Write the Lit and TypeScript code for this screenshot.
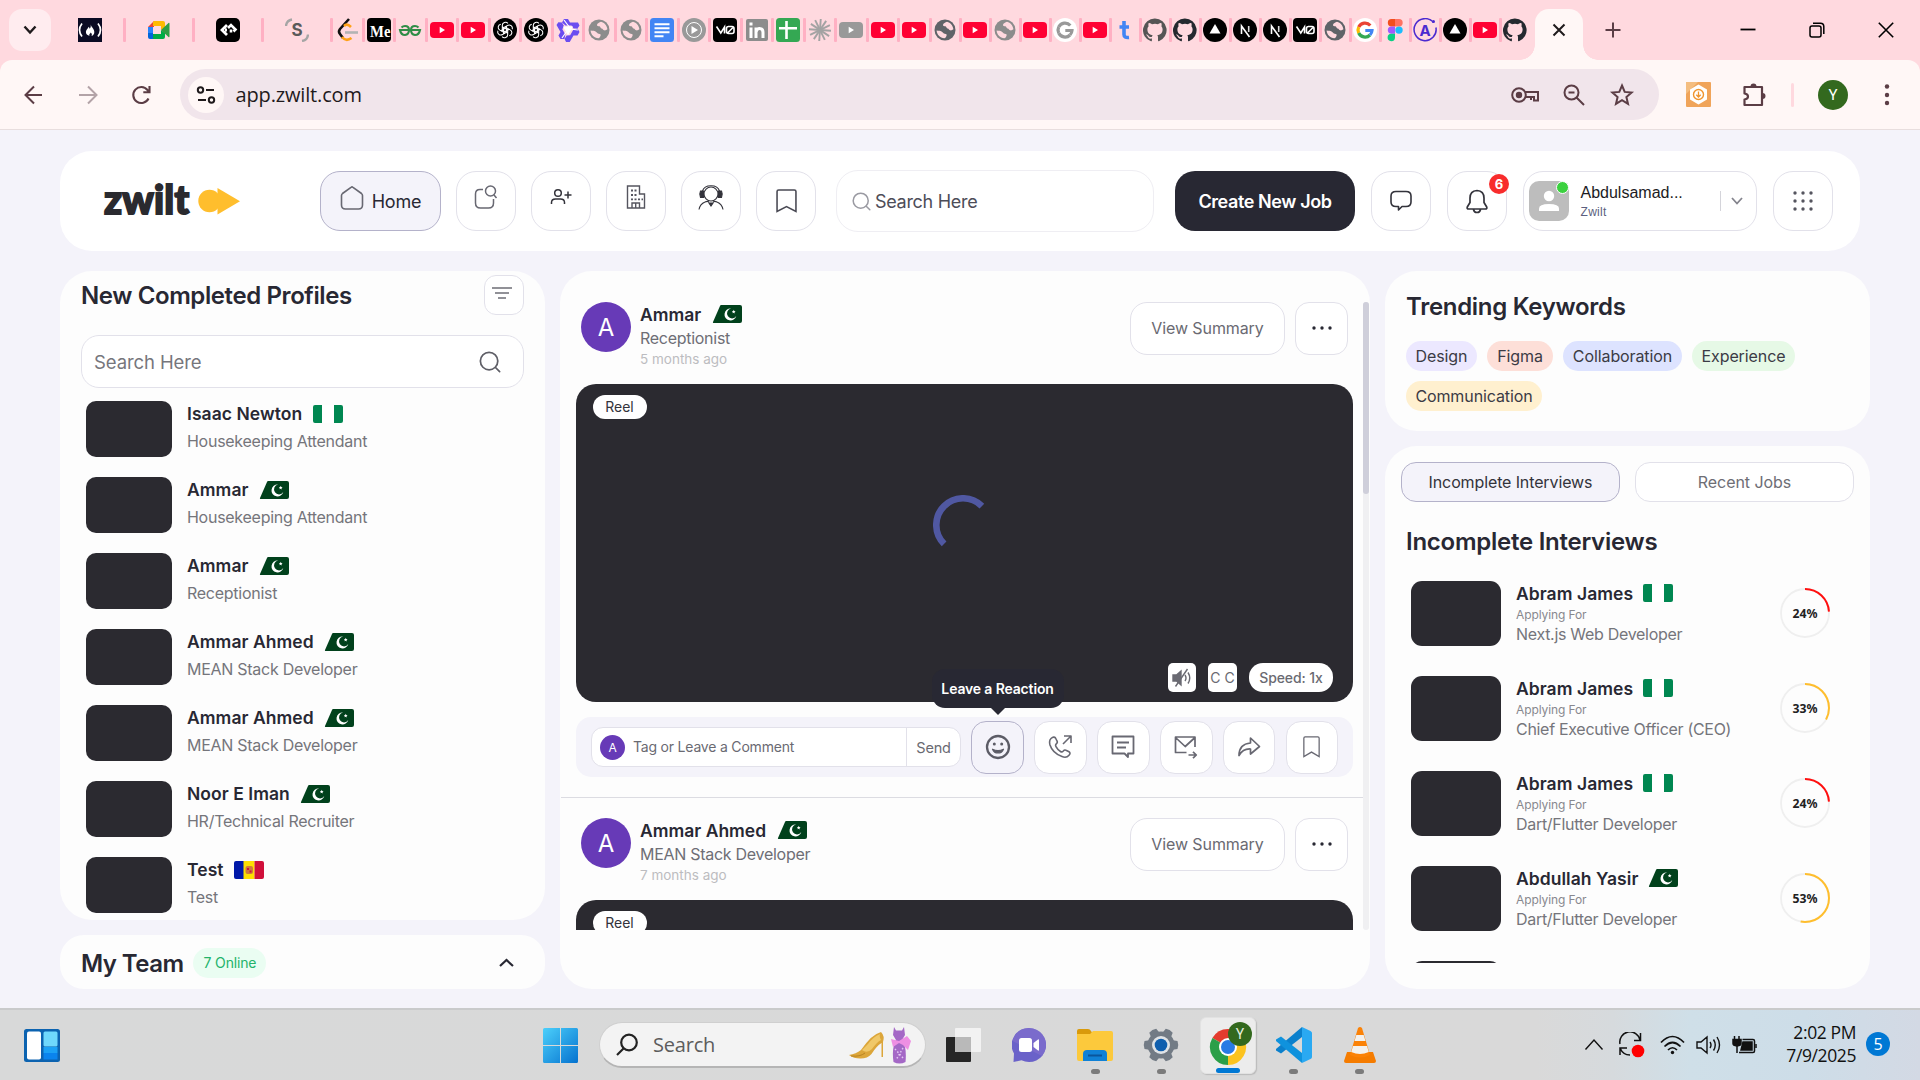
import { LitElement, html, svg, css } from "lit";
import { customElement, property } from "lit/decorators.js";

const base = css`
  *, *::before, *::after { box-sizing: border-box; }
  svg { display: block; flex: none; }
`;

const youtube = (bg: string) => svg`<rect x="0" y="4" width="24" height="16" rx="4" fill="${bg}"/><path d="M9.700 8.800v6.400l5.300-3.200z" fill="#fff"/>`;
const globe = (c: string) => svg`<circle cx="12" cy="12" r="10.500" fill="${c}"/><path d="M3.600 12.500c2 .2 4.500.3 5.600 1.500 1.200 1.300 2.200 1.800 3.500 2 1.400.2 1 1.600.5 2.500-.4.8-.6 1.600-1.800 1.800C7 20 3.800 16.500 3.600 12.500zM14 3.700c-1.500.8-3.800 1.200-4 3-.1 1.600 1.300 1.300 2.500 1.600 1 .3.700 1.900 2 2.200 1.500.3 1.600 1.500 2.600 1.800 1.300.3 2.300-.3 3.300-1C20 7.500 17.500 4.500 14 3.700z" fill="#ffd9df"/>`;
const github = (c: string) => svg`<path fill="${c}" d="M12 .5a11.700 11.700 0 0 0-4 22.800c.6.1.9-.3.9-.6v-2.200c-3.300.7-4-1.500-4-1.500-.5-1.400-1.300-1.800-1.300-1.800-1.100-.7.1-.7.1-.7 1.200.1 1.800 1.200 1.800 1.200 1.100 1.800 2.800 1.300 3.500 1 .1-.8.400-1.300.8-1.600-2.700-.3-5.400-1.300-5.400-5.800 0-1.300.5-2.300 1.200-3.100-.1-.3-.5-1.500.1-3.200 0 0 1-.3 3.300 1.200a11.500 11.500 0 0 1 6 0c2.300-1.500 3.300-1.200 3.300-1.200.6 1.700.2 2.900.1 3.200.8.8 1.200 1.900 1.200 3.100 0 4.500-2.700 5.500-5.400 5.800.4.400.8 1.100.8 2.200v3.300c0 .3.200.7.900.6A11.700 11.700 0 0 0 12 .5z"/>`;
const letter = (t: string, fill: string, size: number, y = 17, family = "Inter, sans-serif", weight = 700) =>
  svg`<text x="12" y="${y}" text-anchor="middle" font-size="${size}" font-weight="${weight}" font-family="${family}" fill="${fill}">${t}</text>`;
const chatgpt = svg`<circle cx="12" cy="12" r="12" fill="#000"/><g fill="none" stroke="#fff" stroke-width="1.050">${[0, 60, 120, 180, 240, 300].map(a => svg`<path transform="rotate(${a} 12 12)" d="M9.300 13.500V7.600a3.200 3.200 0 0 1 5.600-2.200M9.300 8.800l5.400 3.100"/>`)}</g>`;
const vercel = svg`<circle cx="12" cy="12" r="12" fill="#000"/><path d="M12 6l5.500 9.500h-11z" fill="#fff"/>`;
const next = svg`<circle cx="12" cy="12" r="12" fill="#000"/><path d="M8.500 16V8l8 11" fill="none" stroke="#fff" stroke-width="1.600"/><path d="M15.700 8v6" stroke="#ddd" stroke-width="1.600"/>`;
const v0 = svg`<rect width="24" height="24" rx="4" fill="#000"/><path d="M3.500 8.500l4.300 6.500L11.500 9v6.500M15 8.500h4q2 0 2 2v3q0 2-2 2h-3.500q-2 0-2-2v-3q0-2 2-2zM14.500 15L20.500 9" fill="none" stroke="#fff" stroke-width="1.600"/>`;
const google = (grey: boolean) => svg`<circle cx="12" cy="12" r="12" fill="#fff"/><g fill="none" stroke-width="3.200">
  <path d="M17.300 7.500A7 7 0 0 0 5.700 9" stroke="${grey ? "#999" : "#ea4335"}"/><path d="M5.700 9a7 7 0 0 0 0 6" stroke="${grey ? "#999" : "#fbbc05"}"/>
  <path d="M5.700 15a7 7 0 0 0 11.300 2" stroke="${grey ? "#999" : "#34a853"}"/><path d="M17 17a7 7 0 0 0 2-4.500H12.300" stroke="${grey ? "#999" : "#4285f4"}"/></g>`;

const favicons: Record<string, unknown> = {
  fcc: svg`<rect width="24" height="24" fill="#0a0a23"/><path d="M4 5.500q-5 6.500 0 13M20 5.500q5 6.500 0 13" fill="none" stroke="#fff" stroke-width="1.700"/><path d="M12.500 6c.5 3 3.800 4.500 3.800 8 0 2-1 3.500-2.800 4 .8-1.500.2-2.500-.8-3.500-.6 1.500-2.200 1.800-1 3.500-2.400-.6-4-2-3.800-4.200.2-2.400 2.400-3 2.600-5 .8.600 1 1.300 1 2 1.300-1 1.600-3 1-4.800z" fill="#fff"/>`,
  meet: svg`<path d="M1 9l6-6v6z" fill="#ea4335"/><path d="M1 9h5v6H1z" fill="#2684fc"/><path d="M1 15h5v6H3q-2 0-2-2z" fill="#0066da"/><path d="M7 3h9q2 0 2 2v4l-4 3V8H6V4z" fill="#ffba00"/><path d="M6 16h8v-4l4 3v4q0 2-2 2H6z" fill="#00ac47"/><path d="M14 12l7.500-7q1-.6 1 .8v12.400q0 1.400-1 .8z" fill="#2f9e44"/>`,
  cr: svg`<rect width="24" height="24" rx="5" fill="#000"/><path d="M11 7L6 12l5 5M9 12h2" fill="none" stroke="#fff" stroke-width="2.800"/><path d="M12 10l3-3 4.500 4.500-2 2M15 11.500v3" fill="none" stroke="#fff" stroke-width="2.600"/>`,
  s: svg`${letter("S", "#5a5a5a", 17, 18)}<path d="M1 8q.5-5.500 6-6.500M17 23q5.500-1 6-6.500" fill="none" stroke="#a5a5a5" stroke-width="2.400"/>`,
  leet: svg`<path d="M14 1L5 11q-2 2.500 0 5l3 4" fill="none" stroke="#111" stroke-width="2.600"/><path d="M9 8q3-3 7 1M7 19q4 5 9.500 1" fill="none" stroke="#ffa116" stroke-width="2.600"/><path d="M10 14.500h13" stroke="#b3b3b3" stroke-width="2.600"/>`,
  medium: svg`<rect width="24" height="24" rx="4" fill="#000"/><text x="3" y="18.500" font-size="17.500" font-weight="700" font-family="Liberation Serif, serif" fill="#fff" textLength="20.500" lengthAdjust="spacingAndGlyphs">Me</text>`,
  gfg: svg`<path d="M11 12H2q1 5 5 5 4-.5 4-5 0-4-4-4-2 0-3.500 1.500M13 12h9q-1 5-5 5-4-.5-4-5 0-4 4-4 2 0 3.500 1.500" fill="none" stroke="#2f8d46" stroke-width="2.100"/>`,
  yt: youtube("#ff0033"),
  ytg: youtube("#999"),
  gpt: chatgpt,
  qwen: svg`<g fill="#6b4df0">${[0, 120, 240].map(a => svg`<path transform="rotate(${a} 12 12)" d="M8 1h4l2 3.500h8l1.500 3-2 3h-4l-2-3H9.500L6 4.500z"/>`)}</g><g stroke="#fff" stroke-width="1.200" fill="none"><path d="M8 9h8l-4 7z" fill="#fff"/><path d="M8 2l6 8M22 12l-8-1M6 20l5-7"/></g>`,
  globe: globe("#8c8c8c"),
  globed: globe("#5f6368"),
  docs: svg`<rect width="24" height="24" rx="3.500" fill="#4285f4"/><path d="M4.500 6.200h15M4.500 10.200h15M4.500 14.200h15M4.500 18.200h9" stroke="#fff" stroke-width="2"/>`,
  ytm: svg`<circle cx="12" cy="12" r="12" fill="#999"/><circle cx="12" cy="12" r="7.500" fill="none" stroke="#fff"/><path d="M9.500 8v8l6.500-4z" fill="#fff"/>`,
  v0,
  li: svg`<rect x="1" y="1" width="22" height="22" rx="2" fill="#8c8c8c"/><path d="M6 9.500V20M6 4.500v3M11 9.500V20M11 14q1-3.800 4-3.500 3 .2 3 4V20" fill="none" stroke="#fff" stroke-width="3"/>`,
  sheet: svg`<rect width="24" height="24" rx="3.500" fill="#34a853"/><path d="M3 10.200h18M10.500 3v18" stroke="#fff" stroke-width="2.600"/>`,
  claude: svg`<g stroke="#a3a3a3" stroke-width="1.900">${[0, 30, 60, 90, 120, 150].map(a => svg`<path transform="rotate(${a + 4} 12 12)" d="M12 1v22"/>`)}</g>`,
  gg: google(true),
  g: google(false),
  t: svg`<path d="M11 3v13.500q0 3.500 5 3M6.500 9h9.500" fill="none" stroke="#4285f4" stroke-width="3.600"/>`,
  gh: github("#24292f"),
  ghg: github("#555"),
  vercel,
  next,
  figma: svg`<path d="M12 1H8.500a3.700 3.700 0 0 0 0 7.400H12z" fill="#f24e1e"/><path d="M12 1h4a3.700 3.700 0 0 1 0 7.400h-4z" fill="#ff7262"/><path d="M12 8.400H8.500a3.700 3.700 0 0 0 0 7.400H12z" fill="#a259ff"/><circle cx="16" cy="12.100" r="3.700" fill="#1abcfe"/><path d="M12 15.800H8.500A3.700 3.700 0 1 0 12 19.500z" fill="#0acf83"/>`,
  apollo: svg`<path d="M20.500 4.500a11 11 0 1 0 2.400 5" fill="none" stroke="#4b2ad0" stroke-width="1.500"/>${letter("A", "#4b2ad0", 15, 17.500)}<circle cx="20.500" cy="3.600" r="1.500" fill="#4b2ad0"/>`,
};

const wideTabs = ["fcc", "meet", "cr", "s"];
const midTabs = ["leet", "medium", "gfg", "yt", "yt", "gpt", "gpt", "qwen", "globe", "globe", "docs", "ytm", "v0", "li", "sheet", "claude", "ytg", "yt", "yt"];
const slimTabs = ["globed", "yt", "globe", "yt", "gg", "yt", "t", "ghg", "gh", "vercel", "next", "next", "v0", "globed", "g", "figma", "apollo", "vercel", "yt", "gh"];

@customElement("browser-chrome")
export class BrowserChrome extends LitElement {
  static styles = [base, css`
    :host { display: block; background: #ffd9df; height: 130px; }
    .strip { height: 60px; display: flex; align-items: center; }
    .menu { width: 42px; height: 42px; border-radius: 13px; background: #ffecef; margin-left: 9px; margin-right: 4.500px; display: grid; place-items: center; }
    .tab { height: 24px; display: flex; align-items: center; justify-content: center; position: relative; flex: none; }
    .tab::after { content: ""; position: absolute; right: -1.500px; top: 0; width: 3px; height: 24px; border-radius: 1px; background: #ffb0c3; }
    .tab.last::after { display: none; }
    .wide { width: 69px; } .mid { width: 31.500px; } .slim { width: 30px; }
    .active { align-self: flex-end; width: 48px; height: 51px; margin-left: 5px; background: #fff7f6; border-radius: 14px 14px 0 0; display: grid; place-items: center; padding-bottom: 9px; position: relative; }
    .active::before, .active::after { content: ""; position: absolute; bottom: 0; width: 15px; height: 15px; }
    .active::before { left: -15px; background: radial-gradient(circle at 0 0, transparent 14.500px, #fff7f6 15px); }
    .active::after { right: -15px; background: radial-gradient(circle at 100% 0, transparent 14.500px, #fff7f6 15px); }
    .plus { margin-left: 22px; }
    .win { margin-left: auto; display: flex; gap: 53px; margin-right: 26px; align-items: center; }
    .bar { height: 70px; background: #fff7f6; border-radius: 12px 12px 0 0; border-bottom: 1px solid #e8dede; display: flex; align-items: center; padding-left: 22px; }
    .nav { display: flex; gap: 29.500px; }
    .omni { margin-left: 27px; width: 1479px; height: 51px; border-radius: 26px; background: #f1e5eb; display: flex; align-items: center; padding: 0 24px 0 8px; }
    .site { width: 36px; height: 36px; border-radius: 50%; background: #fff7f6; display: grid; place-items: center; }
    .url { font: 20px "Open Sans", "Noto Sans", sans-serif; color: #1f1a1c; margin-left: 11.500px; letter-spacing: -0.150px; }
    .acts { margin-left: auto; display: flex; gap: 22px; align-items: center; }
    .ext { display: flex; align-items: center; margin-left: 27px; }
    .ext .p { margin-left: 30px; }
    .sep { width: 3px; height: 24px; background: #ffd9df; border-radius: 2px; margin: 0 24px 0 24px; }
    .me { width: 30px; height: 30px; border-radius: 50%; background: #33691e; color: #fff; font: 15px Roboto, sans-serif; display: grid; place-items: center; }
    .dots { margin-left: 27px; }
  `];
  private tab(n: string, cls: string, last = false) {
    return html`<div class="tab ${cls} ${last ? "last" : ""}"><svg width="24" height="24" viewBox="0 0 24 24">${favicons[n]}</svg></div>`;
  }
  render() {
    const ink = "#5b3d45";
    return html`
      <div class="strip">
        <div class="menu"><svg width="14" height="10" viewBox="0 0 14 10"><path d="M1.500 1.500L7 7.500l5.500-6" fill="none" stroke="#1f1a1c" stroke-width="2.400"/></svg></div>
        ${wideTabs.map(n => this.tab(n, "wide"))}
        ${midTabs.map(n => this.tab(n, "mid"))}
        ${slimTabs.map((n, i) => this.tab(n, "slim", i === slimTabs.length - 1))}
        <div class="active"><svg width="14" height="14" viewBox="0 0 14 14"><path d="M1.500 1.500l11 11M12.500 1.500l-11 11" stroke="#1f1a1c" stroke-width="2"/></svg></div>
        <div class="plus"><svg width="16" height="16" viewBox="0 0 16 16"><path d="M8 .5v15M.5 8h15" stroke="${ink}" stroke-width="2"/></svg></div>
        <div class="win">
          <svg width="16" height="16" viewBox="0 0 16 16"><path d="M.5 7.500h15" stroke="#000" stroke-width="1.800"/></svg>
          <svg width="16" height="16" viewBox="0 0 16 16" fill="none" stroke="#000" stroke-width="1.500"><rect x="1" y="4" width="11" height="11" rx="2"/><path d="M4 1.200h7.500q3.300 0 3.300 3.300V12"/></svg>
          <svg width="16" height="16" viewBox="0 0 16 16"><path d="M.8.8l14.400 14.400M15.200.8L.8 15.200" stroke="#000" stroke-width="1.600"/></svg>
        </div>
      </div>
      <div class="bar">
        <div class="nav">
          <svg width="24" height="24" viewBox="0 0 24 24" fill="none" stroke="${ink}" stroke-width="2"><path d="M20 12H4M12 3.500L3.500 12l8.500 8.500"/></svg>
          <svg width="24" height="24" viewBox="0 0 24 24" fill="none" stroke="#b3a3a7" stroke-width="2"><path d="M3 12h17M12 3.500l8.500 8.500-8.500 8.500"/></svg>
          <svg width="24" height="24" viewBox="0 0 24 24" fill="none" stroke="${ink}" stroke-width="2.100"><path d="M19.500 15.500A8 8 0 1 1 18.500 7L20.500 9M20.500 3v6.200h-6.200"/></svg>
        </div>
        <div class="omni">
          <div class="site"><svg width="20" height="18" viewBox="0 0 20 18" fill="none" stroke="#1f1a1c" stroke-width="2"><circle cx="4.500" cy="4" r="2.700"/><path d="M10 4h8M2 14h8"/><circle cx="15.500" cy="14" r="2.700"/></svg></div>
          <span class="url">app.zwilt.com</span>
          <div class="acts">
            <svg width="28" height="26" viewBox="0 0 28 26" fill="none" stroke="${ink}" stroke-width="2"><circle cx="8" cy="13" r="6.800"/><circle cx="8" cy="13" r="2.200" fill="${ink}"/><path d="M14 10h13v8.500h-4V15h-3v3"/><path d="M14 15h6"/></svg>
            <svg width="26" height="26" viewBox="0 0 26 26" fill="none" stroke="${ink}" stroke-width="2"><circle cx="10.500" cy="10.500" r="7"/><path d="M7.500 10.500h6M15.500 15.500l7.500 7.500"/></svg>
            <svg width="26" height="26" viewBox="0 0 26 26" fill="none" stroke="${ink}" stroke-width="2"><path d="M13 3.500l2.700 6.400 6.900.6-5.200 4.500 1.600 6.800L13 18.200l-6 3.600L8.600 15 3.400 10.500l6.900-.6z"/></svg>
          </div>
        </div>
        <div class="ext">
          <svg width="25" height="25" viewBox="0 0 25 25"><rect width="25" height="25" rx="1" fill="#f0a45a"/><path d="M0 0h12L0 12z" fill="#f4bd80"/><path d="M12.500 2.500l8.500 5v10l-8.500 5-8.500-5v-10z" fill="#fff"/><circle cx="12.500" cy="12.500" r="5" fill="none" stroke="#f0952f" stroke-width="1.400"/><path d="M12.500 9.500v5M10.300 12.800l2.200 2.200 2.200-2.200" fill="none" stroke="#f0952f" stroke-width="1.300"/></svg>
          <svg class="p" width="26" height="26" viewBox="0 0 26 26" fill="none" stroke="${ink}" stroke-width="2.200"><path d="M3.500 5h17.500v18H3.500v-5.500q3.500-.5 3.500-3t-3.500-3z" stroke-linejoin="round"/><path d="M9.500 4.500a3 3 0 0 1 6 0zM21.500 11a3 3 0 0 1 0 6z" fill="${ink}" stroke="none"/></svg>
          <div class="sep"></div><div class="me">Y</div>
          <svg class="dots" width="24" height="26" viewBox="0 0 24 26" fill="${ink}"><circle cx="12" cy="4.500" r="2.200"/><circle cx="12" cy="13" r="2.200"/><circle cx="12" cy="21" r="2.200"/></svg>
        </div>
      </div>`;
  }
}

const bookmark = (w: number, h: number, c = "#55555f") => html`<svg width="${w}" height="${h}" viewBox="0 0 20 24" preserveAspectRatio="none" fill="none" stroke="${c}" stroke-width="1.500"><path d="M1 2.500Q1 1 2.500 1h15Q19 1 19 2.500V22.500L10 17.500 1 22.500z"/></svg>`;
const magnifier = (s: number, c: string) => html`<svg width="${s}" height="${s}" viewBox="0 0 24 24" fill="none" stroke="${c}" stroke-width="1.900" stroke-linecap="round"><circle cx="11" cy="11" r="9.500"/><path d="M18 18l4.500 4.500"/></svg>`;

@customElement("country-flag")
export class CountryFlag extends LitElement {
  @property() code = "ng";
  static styles = [base, css`:host { display: block; flex: none; }`];
  render() {
    if (this.code === "pk") return html`<svg width="30" height="18" viewBox="0 0 30 18"><path d="M9 0H28q2 0 2 2v14q0 2-2 2H1.500Q.5 18 1 17L8 1Q8.500 0 9 0z" fill="#01411c"/><path d="M19 3.500A6 6 0 1 0 24.300 11 5 5 0 1 1 19 3.500z" fill="#fff"/><path d="M21.800 4.800l.5 1.200 1.300.2-1 .9.100 1.300-1.100-.7-1.100.6.300-1.300-.9-.9 1.300-.1z" fill="#fff"/></svg>`;
    if (this.code === "ad") return html`<svg width="30" height="18" viewBox="0 0 30 18"><path d="M2 0h8v18H2q-2 0-2-2V2q0-2 2-2z" fill="#0018a8"/><path d="M9.500 0h11v18h-11z" fill="#fedf00"/><path d="M20.500 0H28q2 0 2 2v14q0 2-2 2h-7.500z" fill="#d0103a"/><rect x="11.500" y="5" width="7.500" height="8" rx="2" fill="#d07a3a"/><path d="M13 7h2v2h-2zM15.500 9.500h2v2h-2z" fill="#d0103a"/></svg>`;
    return html`<svg width="30" height="18" viewBox="0 0 30 18"><path d="M0 2q0-2 2-2h7v18H2q-2 0-2-2zM21 0h7q2 0 2 2v14q0 2-2 2h-7z" fill="#008751"/><path d="M9 0h12v18H9z" fill="#fff"/></svg>`;
  }
}

@customElement("app-header")
export class AppHeader extends LitElement {
  static styles = [base, css`
    :host { display: flex; height: 100px; width: 1800px; background: #fff; border-radius: 32px; align-items: center; font-family: Inter, sans-serif; color: #282833; }
    .logo { width: 260px; padding-left: 44px; display: flex; align-items: center; }
    .logo span { font: 900 39px/36px Lato, sans-serif; letter-spacing: 0.200px; color: #2a2a2f; margin-top: -5px; width: 94px; -webkit-text-stroke: 1.800px #2a2a2f; }
    nav { display: flex; gap: 15px; }
    .btn { width: 60px; height: 60px; border: 1px solid #e2e1ea; border-radius: 20px; display: flex; align-items: center; justify-content: center; background: #fff; position: relative; flex: none; }
    .up { padding-bottom: 8px; }
    .home { width: 121px; background: #f4f3fa; border-color: #b4b2ca; gap: 8px; font-size: 18px; letter-spacing: -0.200px; }
    .home svg { margin-top: -7px; }
    .search { width: 318px; height: 62px; border: 1px solid #efeef3; border-radius: 22px; margin-left: 20px; display: flex; align-items: center; padding: 1px 0 0 15px; gap: 4px; font-size: 18px; color: #4d4d58; letter-spacing: -0.300px; }
    .create { width: 180px; height: 60px; border-radius: 20px; background: #282833; color: #fff; font-size: 18px; font-weight: 600; display: grid; place-items: center; margin-left: 21px; letter-spacing: -0.400px; }
    .tools { display: flex; gap: 16px; margin-left: 16px; }
    .badge { position: absolute; left: 41px; top: 2px; width: 20px; height: 20px; border-radius: 50%; background: #f82c2c; color: #fff; font-size: 13px; font-weight: 700; display: grid; place-items: center; }
    .profile { width: 234px; height: 60px; border: 1px solid #e2e1ea; border-radius: 20px; display: flex; align-items: center; padding-left: 5px; }
    .pic { width: 40px; height: 40px; border-radius: 10px; background: #bdbdbd; position: relative; }
    .on { position: absolute; right: 0; top: 0; width: 13px; height: 13px; border-radius: 50%; background: #3bd13f; border: 1px solid #fff; }
    .who { margin-left: 11.500px; width: 139.500px; font: 16px/20px "Liberation Sans", sans-serif; color: #1c1c24; }
    .who small { display: block; font-size: 12px; line-height: 16px; color: #5c5f80; margin-top: 1px; letter-spacing: 0.300px; }
    .line { width: 1px; height: 20px; background: #d4d4da; margin-right: 10px; }
  `];
  render() {
    const k = "#33333b";
    return html`
      <div class="logo"><span>zwilt</span><svg width="42" height="27" viewBox="0 0 42 27" fill="#ffbe2d"><circle cx="11.500" cy="13" r="11.200"/><path d="M19.500 0L42 13.300 19.500 26.600z"/></svg></div>
      <nav>
        <div class="btn home"><svg width="24" height="24" viewBox="0 0 24 24" fill="none" stroke="#686872" stroke-width="1.600"><path d="M1.500 9.500q0-1.200 1-2L11 1.300q1-.8 2 0l8.500 6.200q1 .8 1 2V19q0 4-4 4h-13q-4 0-4-4z"/></svg>Home</div>
        <div class="btn up"><svg width="24" height="24" viewBox="0 0 24 24" fill="none" stroke="#686872" stroke-width="1.500"><path d="M9 4.500H6q-4.500 0-4.500 4.500v9q0 5 5 5h8q5 0 5-5v-4"/><circle cx="16.500" cy="6" r="5"/><path d="M20 10l2.500 3"/></svg></div>
        <div class="btn up"><svg width="22" height="18" viewBox="0 0 22 18" fill="none" stroke="${k}" stroke-width="1.500"><circle cx="8" cy="5" r="3.300"/><path d="M1.500 16v-1.500q0-3.500 4-3.500h5q4 0 4 3.500V16M14.500 7h7M18 3.500v7"/></svg></div>
        <div class="btn up"><svg width="20" height="24" viewBox="0 0 20 24" fill="none" stroke="#55555f" stroke-width="1.400"><path d="M1.500 23V1h12v8h5v14zM6 23v-5h7.500v5M9.700 18v5"/><path d="M5 5.500h7M5 10h7M5 14.300h12" stroke-dasharray="2 1.500" stroke-width="1.800"/></svg></div>
        <div class="btn up"><svg width="26" height="25" viewBox="0 0 26 25" fill="none" stroke="${k}" stroke-width="1.100"><circle cx="13" cy="9" r="7"/><path d="M4.500 6Q6 .7 13 .7T21.500 6"/><path d="M2.500 6h3v6.500h-3q-1.500-3.200 0-6.500zM20.500 6h3q1.500 3.200 0 6.500h-3z" fill="${k}"/><path d="M1 24.500q1-5.500 6-7.500 3-1.500 4 .5M25 24.500q-1-5.500-6-7.500-3-1.500-4 .5"/><path d="M11 18h4l-2 3z" fill="${k}"/></svg></div>
        <div class="btn">${bookmark(21, 24, "#4a4a54")}</div>
      </nav>
      <div class="search">${magnifier(19, "#9a9aa2")}Search Here</div>
      <div class="create">Create New Job</div>
      <div class="tools">
        <div class="btn"><svg width="22" height="22" viewBox="0 0 22 22" fill="none" stroke="${k}" stroke-width="1.600" stroke-linejoin="round"><path d="M6 1.500h10q5 0 5 4.500v6q0 4.500-5 4.500h-4L8.500 20v-3.500H6q-5 0-5-4.500V6q0-4.500 5-4.500z"/></svg></div>
        <div class="btn"><svg width="24" height="25" viewBox="0 0 24 25" fill="none" stroke="${k}" stroke-width="1.700"><path d="M12 1.500q-7 .5-7 7.500v4.500L2.300 18q-.8 2 1.500 2h16.400q2.300 0 1.500-2L19 13.500V9q0-7-7-7.500zM8.500 20.500q.5 3 3.500 3t3.500-3"/></svg><span class="badge">6</span></div>
        <div class="profile">
          <div class="pic"><svg width="40" height="40" viewBox="0 0 40 40" fill="#fff"><circle cx="20" cy="15" r="5.200"/><path d="M10 30v-2.500q0-4.500 10-4.500t10 4.500V30z"/></svg><i class="on"></i></div>
          <div class="who">Abdulsamad...<small>Zwilt</small></div>
          <i class="line"></i><svg width="12" height="8" viewBox="0 0 12 8"><path d="M1 1l5 5.500L11 1" fill="none" stroke="#84848d" stroke-width="1.800"/></svg>
        </div>
        <div class="btn"><svg width="20" height="20" viewBox="0 0 20 20" fill="#55555f">${[2, 10, 18].map(y => [2, 10, 18].map(x => svg`<circle cx="${x}" cy="${y}" r="1.700"/>`))}</svg></div>
      </div>`;
  }
}

const profiles = [
  ["Isaac Newton", "ng", "Housekeeping Attendant"],
  ["Ammar", "pk", "Housekeeping Attendant"],
  ["Ammar", "pk", "Receptionist"],
  ["Ammar Ahmed", "pk", "MEAN Stack Developer"],
  ["Ammar Ahmed", "pk", "MEAN Stack Developer"],
  ["Noor E Iman", "pk", "HR/Technical Recruiter"],
  ["Test", "ad", "Test"],
];

@customElement("profiles-column")
export class ProfilesColumn extends LitElement {
  static styles = [base, css`
    :host { display: flex; flex-direction: column; gap: 15px; width: 485px; font-family: Inter, sans-serif; color: #282833; }
    .card { background: #fdfdfd; border-radius: 32px; height: 649px; padding: 4px 21px 0; overflow: hidden; }
    .head { display: flex; justify-content: space-between; align-items: center; }
    h2 { font-size: 24px; line-height: 30px; font-weight: 600; margin: 0; letter-spacing: -0.400px; padding-top: 2px; }
    .team h2 { padding-top: 3px; letter-spacing: -0.550px; }
    .filter { width: 40px; height: 40px; border: 1px solid #e2e1ea; border-radius: 12px; display: grid; place-items: center; background: #fff; }
    .filter svg { margin-top: -5px; margin-left: -4px; }
    .search { margin-top: 20px; height: 53px; border: 1px solid #e2e1ea; border-radius: 18px; background: #fff; display: flex; align-items: center; justify-content: space-between; padding: 1px 22px 0 12px; font-size: 18.500px; color: #76767c; letter-spacing: -0.100px; }
    .list { padding: 13px 5px 0; display: grid; gap: 20px; }
    .row { display: flex; gap: 15px; height: 56px; }
    .thumb { width: 86px; height: 56px; border-radius: 10px; background: #2b2a30; }
    .nm { display: flex; align-items: center; gap: 10.500px; font-size: 17.500px; font-weight: 600; height: 25px; letter-spacing: 0.050px; white-space: nowrap; }
    .role { font-size: 16px; color: #75757b; line-height: 20px; margin-top: 5px; letter-spacing: -0.270px; }
    .team { height: 54px; border-radius: 24px; background: #fdfdfd; display: flex; align-items: center; padding: 1px 31px 0 21px; }
    .pill { margin-left: 10px; height: 30px; width: 73px; border-radius: 15px; background: #eafdf2; color: #23b36a; font-size: 14px; letter-spacing: -0.150px; display: grid; place-items: center; }
    .team svg { margin-left: auto; }
  `];
  render() {
    return html`
      <section class="card">
        <div class="head"><h2>New Completed Profiles</h2><div class="filter"><svg width="20" height="14" viewBox="0 0 20 14" stroke="#6d6d75" stroke-width="1.600"><path d="M0 2h20M3 7h14M6 12h8"/></svg></div></div>
        <div class="search">Search Here${magnifier(22, "#5f5f67")}</div>
        <div class="list">${profiles.map(([n, f, r]) => html`<div class="row"><div class="thumb"></div><div><div class="nm"><span>${n}</span><country-flag code=${f}></country-flag></div><div class="role">${r}</div></div></div>`)}</div>
      </section>
      <section class="team"><h2>My Team</h2><span class="pill">7 Online</span><svg width="15" height="9" viewBox="0 0 15 9"><path d="M1 8l6.500-6L14 8" fill="none" stroke="#282833" stroke-width="2.200"/></svg></section>`;
  }
}

const smile = html`<svg width="26" height="26" viewBox="0 0 26 26" fill="none" stroke="#5c5c66" stroke-width="2.300"><circle cx="13" cy="13" r="11"/><path d="M7.500 15.200q5.500 2.800 11 0-1.500 3.800-5.500 3.800t-5.500-3.800z" fill="#5c5c66" stroke-width="1.200" stroke-linejoin="round"/><circle cx="9.300" cy="10" r="1.500" fill="#5c5c66" stroke="none"/><circle cx="16.700" cy="10" r="1.500" fill="#5c5c66" stroke="none"/></svg>`;
const phone = html`<svg width="24" height="24" viewBox="0 0 24 24" fill="none" stroke="#686872" stroke-width="1.600" stroke-linejoin="round"><path d="M3 3.500q3-2.500 4.500-.5L9 6q.8 1.500-.5 2.700-1.500 1.300-.5 3 1.500 3 4.500 4.800 1.500 1 2.800-.5 1.200-1.500 2.700-.7l3 1.500q2 1.200 0 3.500-2.500 3-7 1.300Q4.500 18 2 10 .800 5.500 3 3.500zM15 9l8-8M16 1h7v7"/></svg>`;
const note = html`<svg width="24" height="24" viewBox="0 0 24 24" fill="none" stroke="#686872" stroke-width="1.800" stroke-linejoin="round"><path d="M1.500 1.500h21v17H17V22l-3.500-3.500h-12zM6 7.500h12M6 12.500h9"/></svg>`;
const mail = html`<svg width="24" height="24" viewBox="0 0 24 24" fill="none" stroke="#686872" stroke-width="1.700" stroke-linejoin="round"><path d="M21 12V2H1.500V17.500H12.500M1.500 2.500l9.700 9L21 2.500M14.500 20h7.500M19 16.800l3.300 3.200-3.300 3.200"/></svg>`;
const share = html`<svg width="24" height="24" viewBox="0 0 24 24" fill="none" stroke="#686872" stroke-width="1.700" stroke-linejoin="round"><path d="M13.500 3l9 8.500-9 7.500v-5Q6 13.500 2 20.500 2 9 13.500 8z"/></svg>`;

@customElement("feed-post")
export class FeedPost extends LitElement {
  @property() name = "";
  @property() role = "";
  @property() when = "";
  static styles = [base, css`
    :host { display: block; height: 516px; font-family: Inter, sans-serif; padding: 0 10px 0 15px; position: relative; }
    .top { display: flex; height: 82px; padding-left: 5px; padding-right: 5px; }
    .av { width: 50px; height: 50px; border-radius: 50%; background: #673ab7; color: #fff; font-size: 24px; display: grid; place-items: center; }
    .who { margin-left: 9px; flex: 1; color: #282833; }
    .nm { display: flex; align-items: center; gap: 11px; font-size: 17.500px; font-weight: 600; height: 24px; }
    .role { font-size: 16px; line-height: 20px; color: #6e6e75; margin-top: 2px; letter-spacing: -0.280px; }
    .when { font-size: 13.500px; line-height: 16px; color: #bcbcc0; margin-top: 3px; }
    .b { height: 53px; border: 1px solid #e2e1ea; border-radius: 17px; background: #fff; display: grid; place-items: center; font-size: 16px; color: #6a6a72; letter-spacing: -0.100px; padding-bottom: 1px; }
    .sum { width: 155px; } .more { width: 53px; margin-left: 10px; border-radius: 14px; }
    .video { height: 318px; background: #2b2a30; border-radius: 20px; position: relative; padding: 11px 16px; display: flex; flex-direction: column; justify-content: space-between; }
    .reel { width: 54px; height: 24px; border-radius: 12px; background: #fff; font-size: 14px; color: #33333b; display: grid; place-items: center; padding-bottom: 1px; margin-left: 0.500px; }
    .spin { position: absolute; left: 357px; top: 111px; }
    .ctl { display: flex; justify-content: flex-end; gap: 12px; padding: 0 4px 0 0; color: #6a6a72; font-size: 14px; margin-bottom: -1px; }
    .ctl > * { height: 29px; background: #fff; border-radius: 5px; display: grid; place-items: center; }
    .vol { width: 28px; } .cc { width: 29px; } .speed { width: 84px; border-radius: 14px; font-weight: 500; letter-spacing: -0.100px; }
    .bar { margin-top: 15px; height: 60px; background: #f4f3fa; border-radius: 15px; display: flex; align-items: center; gap: 10.200px; padding: 0 15px; }
    .input { flex: none; width: 370px; height: 40px; border: 1px solid #e2e1ea; border-radius: 12px; background: #fff; display: flex; align-items: center; padding-left: 8px; font-size: 14px; letter-spacing: -0.200px; color: #6a6a72; }
    .text { padding-bottom: 2px; letter-spacing: -0.200px; }
    .mini { width: 25px; height: 25px; border-radius: 50%; background: #673ab7; color: #fff; font-size: 12px; display: grid; place-items: center; margin-right: 8px; }
    .send { margin-left: auto; width: 54px; height: 100%; border-left: 1px solid #e2e1ea; display: grid; place-items: center; font-size: 14.500px; }
    .ic { width: 52.700px; height: 53px; border: 1px solid #e2e1ea; border-radius: 15px; background: #fff; display: grid; place-items: center; position: relative; flex: none; }
    .ic.on { background: #f4f3fa; border-color: #b4b2ca; }
    .tip { position: absolute; bottom: 65px; left: 50%; margin-left: -66px; width: 132px; height: 39px; border-radius: 13px; background: #282833; color: #fff; font-size: 14px; font-weight: 600; letter-spacing: -0.150px; display: grid; place-items: center; white-space: nowrap; }
    .tip::after { content: ""; position: absolute; top: 39px; left: 59px; border: 7px solid transparent; border-top-color: #282833; border-bottom: 0; }
    .rule { position: absolute; left: 0; right: 0; bottom: 20px; height: 1px; background: #dcdce2; }
  `];
  render() {
    return html`
      <div class="top"><div class="av">A</div>
        <div class="who"><div class="nm"><span>${this.name}</span><country-flag code="pk"></country-flag></div><div class="role">${this.role}</div><div class="when">${this.when}</div></div>
        <div class="b sum">View Summary</div>
        <div class="b more"><svg width="20" height="4" viewBox="0 0 20 4" fill="#282833"><circle cx="2" cy="2" r="1.700"/><circle cx="10" cy="2" r="1.700"/><circle cx="18" cy="2" r="1.700"/></svg></div>
      </div>
      <div class="video"><div class="reel">Reel</div>
        <svg class="spin" width="60" height="60" viewBox="0 0 60 60"><path d="M11.100 48.900A26.700 26.700 0 0 1 48.900 11.100" fill="none" stroke="#5058a2" stroke-width="6.600"/></svg>
        <div class="ctl"><div class="vol"><svg width="20" height="20" viewBox="0 0 20 20" fill="none" stroke="#6a6a72" stroke-width="1.400"><path d="M1 7h3.500L9 3v14l-4.500-4H1z" fill="#6a6a72"/><path d="M13 7q2 3 0 6M16 4.500q3.500 5.500 0 11M3.500 18.500L15.500 1"/></svg></div><div class="cc">C C</div><div class="speed">Speed: 1x</div></div>
      </div>
      <div class="bar">
        <div class="input"><span class="mini">A</span><span class="text">Tag or Leave a Comment</span><div class="send">Send</div></div>
        <div class="ic on">${smile}<span class="tip">Leave a Reaction</span></div>
        <div class="ic">${phone}</div><div class="ic">${note}</div><div class="ic">${mail}</div><div class="ic">${share}</div><div class="ic">${bookmark(17, 22, "#686872")}</div>
      </div>
      <i class="rule"></i>`;
  }
}

@customElement("feed-column")
export class FeedColumn extends LitElement {
  static styles = [base, css`
    :host { display: flex; width: 810px; height: 718px; background: #fdfdfd; border-radius: 32px; padding: 31px 1px 59px; }
    .posts { flex: 1; overflow: hidden; }
    .track { width: 6px; background: #f0f0f2; border-radius: 3px; }
    .thumb { height: 192px; background: #cfcfda; border-radius: 3px; }
  `];
  render() {
    return html`<div class="posts"><feed-post name="Ammar" role="Receptionist" when="5 months ago"></feed-post><feed-post name="Ammar Ahmed" role="MEAN Stack Developer" when="7 months ago"></feed-post></div><div class="track"><div class="thumb"></div></div>`;
  }
}

const chips = [["Design", "#ece8ff", 71], ["Figma", "#fddfd8", 66], ["Collaboration", "#dde3ff", 119], ["Experience", "#e6f9e6", 103], ["Communication", "#fff0cf", 136]] as const;
const interviews = [
  { n: "Abram James", f: "ng", r: "Next.js Web Developer", p: 24, c: "#ff0f0f" },
  { n: "Abram James", f: "ng", r: "Chief Executive Officer (CEO)", p: 33, c: "#ffbe2d" },
  { n: "Abram James", f: "ng", r: "Dart/Flutter Developer", p: 24, c: "#ff0f0f" },
  { n: "Abdullah Yasir", f: "pk", r: "Dart/Flutter Developer", p: 53, c: "#ffbe2d" },
];

@customElement("insight-column")
export class InsightColumn extends LitElement {
  static styles = [base, css`
    :host { display: flex; flex-direction: column; gap: 15px; width: 485px; font-family: Inter, sans-serif; color: #282833; }
    .card { background: #fdfdfd; border-radius: 32px; }
    h2 { font-size: 24px; line-height: 30px; font-weight: 600; margin: 0; letter-spacing: -0.300px; }
    .trend { height: 160px; padding: 21px 21px 0; }
    .chips { display: flex; flex-wrap: wrap; gap: 10px; margin-top: 19px; }
    .chip { height: 30px; border-radius: 15px; display: grid; place-items: center; font-size: 16px; letter-spacing: -0.100px; color: #3b3b45; padding-bottom: 1px; }
    .inc { height: 543px; padding: 16px 16px 26px; display: flex; flex-direction: column; }
    .tabs { display: grid; grid-template-columns: 1fr 1fr; gap: 15px; }
    .tab { height: 40px; border: 1px solid #e2e1ea; border-radius: 15px; background: #fff; display: grid; place-items: center; font-size: 16px; letter-spacing: -0.050px; color: #6e6e75; padding-bottom: 1px; }
    .tab.on { background: #f4f3fa; border-color: #b4b2ca; color: #33333b; letter-spacing: -0.120px; }
    .inc h2 { margin: 25px 0 0 5px; letter-spacing: -0.250px; }
    .list { flex: 1; overflow: hidden; margin-top: 24px; padding-left: 10px; }
    .row { display: flex; height: 95px; }
    .thumb { width: 90px; height: 65px; border-radius: 11px; background: #2b2a30; margin-right: 15px; }
    .mid { flex: 1; }
    .nm { display: flex; align-items: center; gap: 10px; font-size: 17.500px; font-weight: 600; height: 24px; letter-spacing: 0.050px; }
    .ap { font-size: 12px; line-height: 15px; color: #88888e; margin-top: 2px; letter-spacing: -0.100px; }
    .role { font-size: 16px; line-height: 20px; color: #75757b; margin-top: 2px; letter-spacing: -0.300px; }
    .ring { margin: 7px 24px 0 0; }
  `];
  render() {
    return html`
      <section class="card trend"><h2>Trending Keywords</h2><div class="chips">${chips.map(([t, c, w]) => html`<span class="chip" style="background:${c};width:${w}px">${t}</span>`)}</div></section>
      <section class="card inc">
        <div class="tabs"><div class="tab on">Incomplete Interviews</div><div class="tab">Recent Jobs</div></div>
        <h2>Incomplete Interviews</h2>
        <div class="list">${interviews.map(i => html`<div class="row"><div class="thumb"></div>
          <div class="mid"><div class="nm"><span>${i.n}</span><country-flag code=${i.f}></country-flag></div><div class="ap">Applying For</div><div class="role">${i.r}</div></div>
          <svg class="ring" width="50" height="50" viewBox="0 0 50 50"><circle cx="25" cy="25" r="24" fill="none" stroke="#efefef" stroke-width="1.800"/><circle cx="25" cy="25" r="24" fill="none" stroke="${i.c}" stroke-width="2" pathLength="100" stroke-dasharray="${i.p} 100" transform="rotate(-90 25 25)"/><text x="25" y="30" text-anchor="middle" font-family="Noto Sans, Open Sans, sans-serif" font-weight="700" font-size="13" textLength="25" lengthAdjust="spacingAndGlyphs" fill="#222">${i.p}%</text></svg></div>`)}
          <div class="row"><div class="thumb"></div></div></div>
      </section>`;
  }
}

@customElement("task-bar")
export class TaskBar extends LitElement {
  static styles = [base, css`
    :host { display: grid; grid-template-columns: 543px 1fr 350px; align-items: center; height: 72px; padding: 0; background: linear-gradient(90deg, #d8d9d9 0, #d9d9d9 80%, #d6dadd 84%, #cfdfe8 88%, #cddde8 94%, #d3d9e4 100%); font-family: "Open Sans", "Noto Sans", sans-serif; position: relative; border-top: 2px solid #c9cacb; }
    .left { padding-left: 24px; }
    .mid { display: flex; align-items: center; height: 70px; }
    .find { margin: 0 20px 0 21px; width: 327px; height: 46px; border-radius: 23px; background: #f3f3f3; border: 1px solid #cfcfcf; border-bottom: 2px solid #b5b5b5; display: flex; align-items: center; padding: 0 13px 0 15px; font-size: 20px; letter-spacing: -0.200px; color: #5c5c5c; gap: 14px; }
    .find .art { margin-left: auto; }
    .app { width: 66.200px; height: 70px; display: flex; align-items: center; justify-content: center; position: relative; flex: none; }
    .app.first { width: 34px; margin-right: 16px; }
    .dot::after { content: ""; position: absolute; bottom: 6px; left: 28.500px; width: 9px; height: 5px; border-radius: 3px; background: #7b7b7b; }
    .live { background: #ececec; border: 1px solid #e2e2e2; width: 56px; height: 57px; border-radius: 6px; margin: 0 5px; box-shadow: 1px 1px 1px #bbb; padding-left: 4px; }
    .live::after { content: ""; position: absolute; bottom: 0; left: 15px; width: 24px; height: 5px; border-radius: 3px; background: #0078d4; }
    .tray { display: flex; align-items: center; padding-left: 14px; height: 70px; }
    .tray svg { margin-right: 12px; }
    .tray .sync { margin: 0 15px 0 1px; }
    .tray .vol, .tray .wifi { margin-right: 11px; }
    .clock { margin-left: auto; text-align: right; font-size: 17.500px; line-height: 23px; color: #111; letter-spacing: -0.400px; padding-bottom: 2px; }
    .num { width: 24px; height: 24px; border-radius: 50%; background: #0078d4; color: #fff; font-size: 16px; line-height: 1; display: grid; place-items: center; margin: -2px 30px 0 10px; }
  `];
  render() {
    const k = "#111";
    return html`
      <div class="left"><svg width="36" height="33" viewBox="0 0 36 33"><rect width="36" height="33" rx="2.500" fill="#0c63b0"/><rect x="3" y="2.500" width="14" height="28" rx="2" fill="#fff"/><rect x="19.500" y="2.500" width="14" height="15" rx="1.500" fill="#6fd8fc"/><rect x="19.500" y="18" width="14" height="6" fill="#1ba1f5"/><rect x="19.500" y="24" width="14" height="6.500" fill="#0a84ee"/></svg></div>
      <div class="mid">
        <svg width="35" height="35" viewBox="0 0 35 35"><defs><linearGradient id="w" x1="0" y1="0" x2="1" y2="1"><stop stop-color="#4cd0fb"/><stop offset="1" stop-color="#0572cf"/></linearGradient></defs><path d="M1.500 0H17v17H0V1.500Q0 0 1.500 0zM18 0h15.500Q35 0 35 1.500V17H18zM0 18h17v17H1.500Q0 35 0 33.500zM18 18h17v15.500q0 1.500-1.500 1.500H18z" fill="url(#w)"/></svg>
        <div class="find"><svg width="24" height="24" viewBox="0 0 24 24" fill="none" stroke="#222" stroke-width="2.200"><circle cx="14" cy="9.500" r="7.800"/><path d="M8.500 15.500L2 22"/></svg>Search
          <svg class="art" width="64" height="38" viewBox="0 0 64 38"><path d="M1 29q7-1 12-5Q24 8 33 6q4 4 2 10v15h-1.500V17q-5 3-10 11-4 4.500-11 4.500T1 29z" fill="#dca63a"/><path d="M14 24q5 4 10-1 5-7 9-9-2-4-1-6-7 3-12 10z" fill="#f0c869"/><path d="M3 30q9 1 14-3" fill="none" stroke="#b98322" stroke-width="1"/><path d="M46 1l2 3.500h6L56 1l1 8-3 5q5 7 3.500 22-6 3-12 0-2-14 2.500-22l-3-5z" fill="#a468c6"/><path d="M43 13l8 2 8-5 4 5-3 9-5-5-4-2-6 4z" fill="#ee8fe3"/><path d="M47 23l8 9M55 22l-7 12" stroke="#e4c7f3" stroke-width="1.500" stroke-dasharray="1.500 2"/></svg></div>
        <div class="app first"><svg width="35" height="34" viewBox="0 0 35 34"><rect x="0" y="9" width="25" height="25" rx="1" fill="#262626"/><rect x="9" y="0" width="26" height="24" rx="1" fill="#f2f2f2"/><path d="M9 9h16v15H9z" fill="#b9b9b9"/></svg></div>
        <div class="app"><svg width="34" height="34" viewBox="0 0 34 34"><path d="M17 0a17 17 0 1 1-7.500 32.200L1.500 34 2 25.500A17 17 0 0 1 17 0z" fill="#6a62c9"/><path d="M17 0a17 17 0 0 0-16.500 13L30 28A17 17 0 0 0 17 0z" fill="#8672cf" opacity=".6"/><rect x="7" y="10" width="13" height="14" rx="2.500" fill="#fff"/><path d="M21.500 15l4.500-3.500q1-.5 1 .8v9.400q0 1.300-1 .8L21.500 19z" fill="#fff"/></svg></div>
        <div class="app dot"><svg width="36" height="34" viewBox="0 0 36 34"><path d="M0 3q0-2 2-2h9q2 0 3 2l2 3H0z" fill="#d99a0b"/><path d="M0 6h13l3-3h18q2 0 2 2v26q0 2-2 2H2q-2 0-2-2z" fill="#fcc93c"/><path d="M6 33v-7q0-4 4-4h16q4 0 4 4v7z" fill="#1081d6"/><path d="M11 27.500h14" stroke="#0a559c" stroke-width="2"/></svg></div>
        <div class="app dot"><svg width="36" height="36" viewBox="0 0 36 36"><g fill="#727b85"><circle cx="18" cy="18" r="13.500"/>${[0, 60, 120, 180, 240, 300].map(a => svg`<path transform="rotate(${a + 30} 18 18)" d="M13 8l1-6.500q4-1.500 8 0L23 8z"/>`)}</g><circle cx="18" cy="18" r="9" fill="#dfe3e6"/><circle cx="18" cy="18" r="6.300" fill="#0f5fae"/></svg></div>
        <div class="app live"><svg width="44" height="46" viewBox="0 0 44 46"><path d="M20 25L4.400 16A18 18 0 0 1 35.600 16z" fill="#e33b2e"/><path d="M20 25L35.600 16A18 18 0 0 1 20 43z" fill="#fcc31e"/><path d="M20 25L20 43A18 18 0 0 1 4.400 16z" fill="#2b9f48"/><circle cx="20" cy="25" r="9" fill="#fff"/><circle cx="20" cy="25" r="7" fill="#2a7be4"/><circle cx="32" cy="12" r="12" fill="#33691e"/><text x="32" y="17" text-anchor="middle" font-size="14" font-family="Roboto, sans-serif" fill="#e8f0e0">Y</text></svg></div>
        <div class="app dot"><svg width="36" height="36" viewBox="0 0 36 36"><path d="M26 0l8.500 4Q36 4.800 36 6v24q0 1.300-1.500 2L26 36z" fill="#2aa9f2"/><path d="M26 0v10L5 26.500 0 23.500v-1.500z" fill="#0b80cc"/><path d="M26 36V26L5 9.500 0 12.500V14z" fill="#0f92dd"/></svg></div>
        <div class="app dot"><svg width="32" height="36" viewBox="0 0 32 36"><path d="M3 25h26l3 9q0 2-2 2H2q-2 0-2-2z" fill="#f57c00"/><path d="M14 1q2-2 4 0l8 27q-10 5-20 0z" fill="#fb8207"/><path d="M12.300 8h7.400l1.800 6h-11zM9 19h14l1.800 6q-8.800 4-17.600 0z" fill="#f3f1ee"/></svg></div>
      </div>
      <div class="tray">
        <svg width="20" height="14" viewBox="0 0 20 14"><path d="M1.500 11.500L10 2l8.500 9.500" fill="none" stroke="${k}" stroke-width="1.400"/></svg>
        <svg class="sync" width="28" height="26" viewBox="0 0 28 26" fill="none" stroke="${k}" stroke-width="1.500"><path d="M3 12A10 10 0 0 1 23 8M23.500 1v7.500H17M3 23v-7h7M3 16q3 7 10 7"/><circle cx="21" cy="19" r="6.300" fill="red" stroke="none"/></svg>
        <svg class="wifi" width="25" height="20" viewBox="0 0 25 20" fill="none" stroke="${k}" stroke-width="1.700"><path d="M1 7.500Q12.500-4.500 24 7.500M4.500 11.500q8-8 16 0M8 15q4.500-4.500 9 0"/><circle cx="12.500" cy="17.500" r="1.700" fill="${k}" stroke="none"/></svg>
        <svg class="vol" width="25" height="20" viewBox="0 0 25 20" fill="none" stroke="${k}" stroke-width="1.400"><path d="M1 7h4l6-5v16l-6-5H1zM14 7q2 3 0 6M17.500 4.500q3.500 5.500 0 11M21 2q5 8 0 16"/></svg>
        <svg width="25" height="20" viewBox="0 0 25 20" fill="none" stroke="${k}" stroke-width="1.500"><path d="M2.500 1v4M7 1v4" /><path d="M1 4.500h8v4q0 2-4 2.500-4-.5-4-2.500z" fill="${k}"/><path d="M5 11v7M10.500 4.500H21q1.500 0 1.500 1.500v10q0 1.500-1.500 1.500H7"/><path d="M11 7h9v8H9z" fill="${k}"/><path d="M24 9v4"/></svg>
        <div class="clock">2:02 PM<br>7/9/2025</div><div class="num">5</div>
      </div>`;
  }
}

@customElement("app-root")
export class AppRoot extends LitElement {
  static styles = [base, css`
    :host { display: flex; flex-direction: column; width: 1920px; height: 1080px; overflow: hidden; background: #f4f3fa; }
    .page { flex: 1; padding: 21px 50px 0 60px; display: flex; flex-direction: column; gap: 20px; min-height: 0; }
    .cols { display: flex; gap: 15px; align-items: flex-start; }
  `];
  render() {
    return html`<browser-chrome></browser-chrome><main class="page"><app-header></app-header><div class="cols"><profiles-column></profiles-column><feed-column></feed-column><insight-column></insight-column></div></main><task-bar></task-bar>`;
  }
}
